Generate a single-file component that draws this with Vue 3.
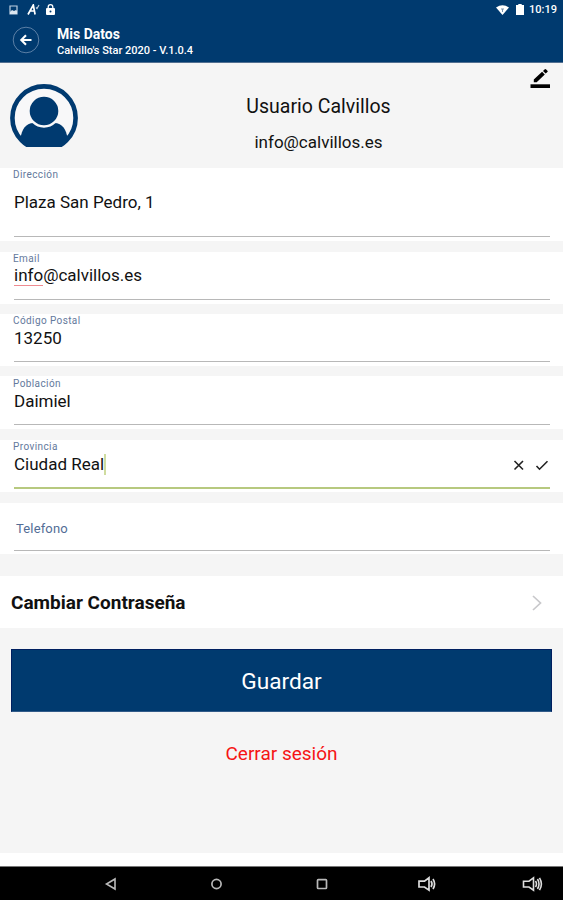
<script setup>
const fields = [
  { id: 'direccion', label: 'Dirección', value: 'Plaza San Pedro, 1' },
  { id: 'email', label: 'Email', marked: 'info', value: '@calvillos.es' },
  { id: 'postal', label: 'Código Postal', value: '13250' },
  { id: 'poblacion', label: 'Población', value: 'Daimiel' },
  { id: 'provincia', label: 'Provincia', value: 'Ciudad Real', active: true },
]
</script>

<template>
  <div class="screen">
    <header class="top">
      <div class="status">
        <svg class="s-img" viewBox="0 0 9 10"><path d="M1 1h7v8H1z" fill="none" stroke="#bfd0e2" stroke-width="1.2" /><path d="M1 7l2-2 2 1 2-1 1 1v3H1z" fill="#dce6f0" /></svg>
        <svg class="s-a" viewBox="0 0 13 11"><path d="M1 10.500L6.300 1l1.800 9.500M3 7h4.600" fill="none" stroke="#fff" stroke-width="1.700" /><path d="M9 3.500l1 1 2-3.500" fill="none" stroke="#c3d0df" stroke-width="1.100" /></svg>
        <svg class="s-lock" viewBox="0 0 9 11"><rect y="4" width="9" height="7" rx="1" fill="#fff" /><path d="M2.200 4.500V3a2.300 2.300 0 014.600 0v1.500" fill="none" stroke="#fff" stroke-width="1.300" /><circle cx="4.500" cy="7.400" r="1" fill="#003a6f" /></svg>
        <span class="grow"></span>
        <svg class="s-wifi" viewBox="0 0 13 10"><path d="M0 2.400Q6.500-2 13 2.400L6.500 10z" fill="#fff" /><path d="M5 4h3M6.500 4v3" stroke="#7891ad" stroke-width="1" /></svg>
        <svg class="s-bat" viewBox="0 0 8 11"><path d="M2.300 0h3.400v1H8v10H0V1h2.300z" fill="#fff" /></svg>
        <span class="clock">10:19</span>
      </div>
      <div class="bar">
        <svg class="back" viewBox="0 0 28 28"><circle cx="14" cy="14" r="12.800" fill="none" stroke="#6486aa" stroke-width=".9" /><path d="M19.500 14H9.500M14 9.300L9.300 14l4.700 4.700" fill="none" stroke="#fff" stroke-width="2.100" /></svg>
        <div class="titles">
          <h1>Mis Datos</h1>
          <p>Calvillo's Star 2020 - V.1.0.4</p>
        </div>
      </div>
    </header>

    <section class="profile">
      <svg class="avatar" viewBox="0 0 68 63">
        <defs><clipPath id="avatar-disc"><circle cx="34" cy="34" r="33" /></clipPath></defs>
        <circle cx="34" cy="34" r="31.600" fill="#f8f8f9" stroke="#003a70" stroke-width="4.600" />
        <g clip-path="url(#avatar-disc)">
          <path d="M10.500 63V54C12 46 15 39 24 39h20c9 0 12 7 13.500 15v9z" fill="#003a70" />
          <circle cx="34" cy="27" r="15.500" fill="#003a70" stroke="#f8f8f9" stroke-width="2.400" />
        </g>
      </svg>
      <div class="who">
        <div class="name">Usuario Calvillos</div>
        <div class="mail">info@calvillos.es</div>
      </div>
      <svg class="pen" viewBox="0 0 20 20"><path d="M.500 15.300H20V19H.500z" /><path d="M3.800 13.300v-2.900L12.100 2.700l2.700 2.700-8.100 7.900zM13 2L14.800.300q.7-.5 1.400.2l1.200 1.200q.6.700 0 1.300L15.600 4.600z" /></svg>
    </section>

    <section v-for="f in fields" :key="f.id" class="field" :class="[f.id, { active: f.active }]">
      <label>{{ f.label }}</label>
      <div class="line">
        <span class="value"><span v-if="f.marked" class="marked">{{ f.marked }}</span>{{ f.value }}</span>
        <i v-if="f.active" class="caret"></i>
        <span class="grow"></span>
        <svg v-if="f.active" class="actions" viewBox="0 0 36 12"><path d="M1.500 2l8.500 8.500M10 2l-8.500 8.500M23.500 7l3 3.200 8-8" fill="none" stroke="#222" stroke-width="1.600" /></svg>
      </div>
    </section>
    <section class="field telefono"><span class="placeholder">Telefono</span></section>

    <section class="password">
      <span>Cambiar Contraseña</span>
      <svg viewBox="0 0 10 16"><path d="M1 1l7.500 7L1 15" fill="none" stroke="#c8c8cb" stroke-width="1.700" /></svg>
    </section>

    <button class="save">Guardar</button>
    <a class="logout">Cerrar sesión</a>
    <span class="grow"></span>
    <div class="blank"></div>

    <nav class="nav">
      <svg viewBox="0 0 24 16"><path d="M16 3v10L7.500 8z" fill="none" stroke="#b9b9b9" stroke-width="1.600" /></svg>
      <svg viewBox="0 0 24 16"><circle cx="12.500" cy="8" r="4.600" fill="none" stroke="#b9b9b9" stroke-width="1.700" /></svg>
      <svg viewBox="0 0 24 16"><rect x="7.500" y="3.700" width="9" height="8.800" rx=".8" fill="none" stroke="#b9b9b9" stroke-width="1.700" /></svg>
      <svg viewBox="0 0 24 16"><path d="M4 5.200h5.500L14 1.800v12.400L9.500 11H4zM16 5q2 3 0 6M18 3q3.200 5 0 10" fill="none" stroke="#ddd" stroke-width="1.700" /></svg>
      <svg viewBox="0 0 24 16"><path d="M3.500 5.200H9l4.500-3.400v12.400L9 11H3.500zM15.500 5q2 3 0 6M17.500 3q3 5 0 10M19.500 1.800q3.800 6.200 0 12.400" fill="none" stroke="#ddd" stroke-width="1.600" /></svg>
    </nav>
  </div>
</template>

<style>
body { margin: 0; background: #f5f5f5; }
</style>

<style scoped>
* { box-sizing: border-box; }
.screen { width: 563px; height: 900px; display: flex; flex-direction: column; background: #f5f5f5; color: #111; font-family: Roboto, "Liberation Sans", sans-serif; white-space: nowrap; overflow: hidden; }
svg { display: block; flex: none; }
.grow { flex: 1; }
.top { height: 63px; flex: none; background: #003a6f; border-bottom: 1px solid #526f91; color: #fff; }
.status { height: 18px; display: flex; align-items: center; padding: 1px 6px 0 9px; }
.s-img { width: 9px; height: 10px; }
.s-a { width: 13px; height: 11px; margin-left: 9px; }
.s-lock { width: 9px; height: 11px; margin-left: 6px; }
.s-wifi { width: 13px; height: 10px; }
.s-bat { width: 8px; height: 11px; margin-left: 7px; }
.clock { margin-left: 5px; font-size: 11px; font-weight: 500; line-height: 14px; }
.bar { display: flex; padding-left: 12px; }
.back { width: 28px; height: 28px; margin-top: 8px; }
.titles { margin: 8px 0 0 17px; }
h1 { margin: 0; font-size: 14px; line-height: 16px; font-weight: 700; }
.titles p { margin: 1px 0 0; font-size: 11px; line-height: 15px; font-weight: 500; }
.profile { height: 105px; flex: none; display: flex; padding: 0 13px 0 10px; }
.avatar { width: 68px; height: 63px; margin-top: 21px; }
.who { flex: 1; text-align: center; padding: 32px 0 0 29px; }
.name { font-size: 19.500px; line-height: 24px; }
.mail { font-size: 17px; line-height: 22px; margin-top: 12px; }
.pen { width: 20px; height: 20px; margin-top: 6px; }
.field { position: relative; height: 52px; flex: none; display: flex; flex-direction: column; background: #fff; padding: 0 13px 0 14px; margin-bottom: 11px; }
.field::after { content: ""; height: 1px; margin: auto 0 4px; background: #b8b8b8; }
.field label { font-size: 10px; line-height: 12px; letter-spacing: .4px; color: #64799c; margin: 1px 0 0 -1px; }
.line { display: flex; align-items: center; height: 20px; }
.value { font-size: 17px; line-height: 20px; }
.marked { box-shadow: 0 1px 0 #ef8b91; }
.direccion { height: 73px; }
.direccion .line { margin-top: 11px; }
.email { margin-bottom: 10px; }
.postal { margin-bottom: 10px; }
.poblacion { height: 53px; }
.postal .line { margin-top: 1px; }
.poblacion label { margin-top: 2px; }
.poblacion .line, .provincia .line { margin-top: 1px; }
.field.active::after { height: 2px; margin-bottom: 3px; background: #b7c97f; }
.caret { width: 2px; height: 21px; background: #cfdc9f; }
.actions { width: 36px; height: 12px; margin: 1px 1px 0 0; }
.telefono { height: 51px; margin-bottom: 22px; }
.field.telefono::after { margin-bottom: 3px; }
.placeholder { font-size: 13px; line-height: 16px; letter-spacing: .15px; color: #526d96; margin: 18px 0 0 2px; }
.password { height: 52px; flex: none; display: flex; align-items: center; justify-content: space-between; background: #fff; padding: 0 21px 0 11px; font-size: 19px; font-weight: 700; }
.password svg { width: 10px; height: 16px; margin-top: 1px; }
.save { width: 541px; height: 63px; flex: none; margin: 21px 0 0 11px; padding: 2px 0 0; border: 1px solid #001f60; border-bottom-color: #315b89; background: #003a6f; color: #fff; font: 400 22.700px/26px Roboto, sans-serif; }
.logout { text-align: center; margin-top: 30px; font-size: 19px; line-height: 24px; color: #f51414; }
.blank { height: 13px; flex: none; background: #fff; }
.nav { height: 34px; flex: none; display: flex; justify-content: space-between; align-items: center; background: #000; border-top: 1px solid #777; padding: 0 19px 0 99px; }
.nav svg { width: 24px; height: 16px; }
</style>
